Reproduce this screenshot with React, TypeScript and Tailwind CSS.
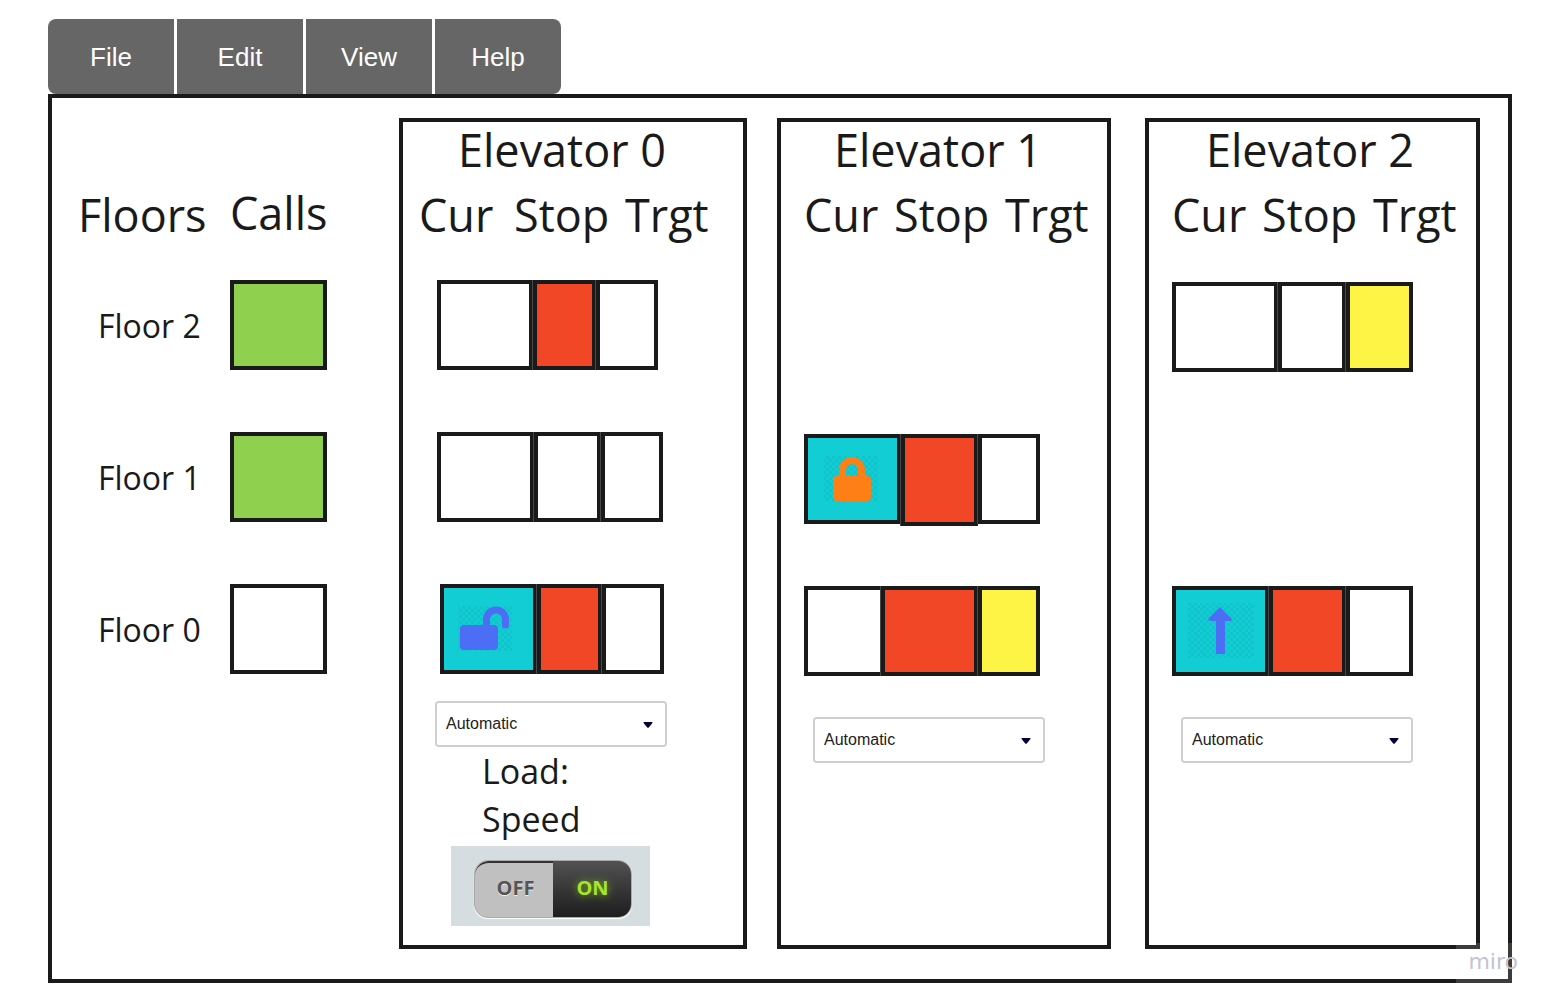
import { useState } from "react";
import type { ReactNode } from "react";

type CellData = { box: string; icon?: ReactNode };
type ElevatorData = {
  name: string;
  panel: string;
  title: string;
  header: string;
  curWidth: string;
  rowsClass: string;
  rows: { floor: string; className?: string; cells: CellData[] }[];
  selectClass: string;
};

const RED = "bg-[#f24726]";
const YELLOW = "bg-[#fef445]";
const CYAN = "bg-[#12cdd4]";

function Checker({ id, x, y, width, height }: { id: string; x: number; y: number; width: number; height: number }) {
  return (
    <>
      <defs>
        <pattern id={id} width="6" height="6" patternUnits="userSpaceOnUse">
          <path d="M0 0h3v3H0zM3 3h3v3H3z" fill="#0b8f94" fillOpacity="0.16" />
        </pattern>
      </defs>
      <rect x={x} y={y} width={width} height={height} fill={`url(#${id})`} />
    </>
  );
}

function UnlockedIcon() {
  return (
    <svg viewBox="0 0 89 82" className="h-full w-full" aria-label="Doors unlocked" role="img">
      <Checker id="unlocked-checker" x={14} y={18} width={54} height={45} />
      <rect x="16" y="37" width="38" height="25" rx="4" fill="#4c6ef5" />
      <path d="M42.500 39v-7.500a9.500 9.500 0 0 1 19 0v5.500" fill="none" stroke="#4c6ef5" strokeWidth="7" strokeLinecap="round" />
    </svg>
  );
}

function LockedIcon() {
  return (
    <svg viewBox="0 0 89 82" className="h-full w-full" aria-label="Doors locked" role="img">
      <Checker id="locked-checker" x={16} y={18} width={54} height={45} />
      <rect x="25" y="38" width="38" height="25" rx="4" fill="#ff7f17" />
      <path d="M34.500 40v-8a9.500 9.500 0 0 1 19 0v8" fill="none" stroke="#ff7f17" strokeWidth="7" />
    </svg>
  );
}

function UpIcon() {
  return (
    <svg viewBox="0 0 89 82" className="h-full w-full" aria-label="Moving up" role="img">
      <Checker id="up-checker" x={12} y={13} width={66} height={55} />
      <path d="M44 17 56 29l-1 2h-6v33h-9V31h-6l-2-2z" fill="#4c6ef5" />
    </svg>
  );
}

const elevators: ElevatorData[] = [
  {
    name: "Elevator 0",
    panel: "basis-[348px] mr-[30px]",
    title: "pl-[55px]",
    header: "pl-4",
    curWidth: "w-[95px]",
    rowsClass: "mt-10 pl-[34px]",
    rows: [
      { floor: "Floor 2", cells: [{ box: "w-24 h-[90px]" }, { box: `w-[63px] h-[90px] ${RED}` }, { box: "w-[62px] h-[90px]" }] },
      { floor: "Floor 1", cells: [{ box: "w-[97px] h-[90px]" }, { box: "w-[67px] h-[90px]" }, { box: "w-[62px] h-[90px]" }] },
      {
        floor: "Floor 0",
        className: "pl-[3px]",
        cells: [
          { box: `w-[97px] h-[90px] ${CYAN}`, icon: <UnlockedIcon /> },
          { box: `w-[65px] h-[90px] ${RED}` },
          { box: "w-[62px] h-[90px]" },
        ],
      },
    ],
    selectClass: "mt-[27px] ml-8",
  },
  {
    name: "Elevator 1",
    panel: "basis-[334px] mr-[34px]",
    title: "pl-[53px]",
    header: "pl-[23px]",
    curWidth: "w-[90px]",
    rowsClass: "mt-[42px] pl-[23px]",
    rows: [
      { floor: "Floor 2", cells: [] },
      {
        floor: "Floor 1",
        cells: [
          { box: `w-[97px] h-[90px] ${CYAN}`, icon: <LockedIcon /> },
          { box: `w-[77px] h-[92px] ${RED}` },
          { box: "w-[62px] h-[90px]" },
        ],
      },
      {
        floor: "Floor 0",
        cells: [{ box: "w-[81px] h-[90px]" }, { box: `-ml-1 w-[97px] h-[90px] ${RED}` }, { box: `w-[62px] h-[90px] ${YELLOW}` }],
      },
    ],
    selectClass: "mt-[41px] ml-8",
  },
  {
    name: "Elevator 2",
    panel: "basis-[335px] mr-7",
    title: "pl-[57px]",
    header: "pl-[23px]",
    curWidth: "w-[90px]",
    rowsClass: "mt-[42px] pl-[23px]",
    rows: [
      { floor: "Floor 2", cells: [{ box: "w-[106px] h-[90px]" }, { box: "w-[68px] h-[90px]" }, { box: `w-[67px] h-[90px] ${YELLOW}` }] },
      { floor: "Floor 1", cells: [] },
      {
        floor: "Floor 0",
        cells: [
          { box: `w-[97px] h-[90px] ${CYAN}`, icon: <UpIcon /> },
          { box: `w-[77px] h-[90px] ${RED}` },
          { box: "w-[67px] h-[90px]" },
        ],
      },
    ],
    selectClass: "mt-[41px] ml-8",
  },
];

const calls = [
  { floor: "Floor 2", color: "bg-[#8fd14f]" },
  { floor: "Floor 1", color: "bg-[#8fd14f]" },
  { floor: "Floor 0", color: "bg-white" },
];

function ModeSelect({ label, className }: { label: string; className: string }) {
  return (
    <div className={`relative w-[232px] ${className}`}>
      <select
        aria-label={`${label} mode`}
        defaultValue="Automatic"
        className="h-[46px] w-full appearance-none rounded-sm border-2 border-[#cfcfcf] bg-white px-[9px] font-['Liberation_Sans',sans-serif] text-[16px] text-[#222]"
      >
        <option>Automatic</option>
        <option>Manual</option>
      </select>
      <svg viewBox="0 0 10 6" className="pointer-events-none absolute top-[21px] right-[14px] h-[6px] w-[10px]" aria-hidden="true">
        <path d="M1 0h8q1 0 .4 1L6 5.300q-1 1-2 0L.6 1Q0 0 1 0z" fill="#050038" />
      </svg>
    </div>
  );
}

function SpeedSwitch() {
  const [on, setOn] = useState(true);
  return (
    <div className="mt-[3px] ml-12 flex h-20 w-[199px] justify-center bg-[#d6dde0] pt-[14px] pl-1">
      <button
        type="button"
        role="switch"
        aria-checked={on}
        aria-label="Speed"
        onClick={() => setOn(!on)}
        className="flex h-[58px] w-[158px] overflow-hidden rounded-[14px] border border-[#aaa] bg-[#c0c0c0] font-['Open_Sans',sans-serif] text-[20px] font-bold shadow-[0_1px_1px_#fff]"
      >
        <span className="flex h-full w-1/2 items-center justify-center rounded-tl-[14px] border-t-2 border-t-[#333] pb-1 pl-1 text-[#555] [text-shadow:0_1px_0_#eee]">OFF</span>
        <span className="flex h-full w-1/2 items-center justify-center border-t-2 border-t-[#505050] bg-linear-to-b from-[#505050] to-[#1e1e1e] pb-1 pl-[2px] text-[#a5e52b] [text-shadow:0_0_8px_#7fb020]">ON</span>
      </button>
    </div>
  );
}

function Elevator({ data, children }: { data: ElevatorData; children?: ReactNode }) {
  return (
    <section className={`shrink-0 grow border-4 border-[#1a1a1a] pb-[19px] ${data.panel}`}>
      <h2 className={`pt-[2px] text-[45px] leading-[52px] ${data.title}`}>{data.name}</h2>
      <div className={`mt-[13px] -mb-px flex text-[45px] leading-[52px] ${data.header}`}>
        <span className={data.curWidth}>Cur</span>
        <span className="w-[111px]">Stop</span>
        <span>Trgt</span>
      </div>
      <div className={`flex flex-col gap-[62px] ${data.rowsClass}`}>
        {data.rows.map((row) => (
          <div key={row.floor} className={`flex h-[90px] items-start ${row.className ?? ""}`}>
            {row.cells.map((cell, i) => (
              <div key={i} className={`shrink-0 border-4 border-[#1a1a1a] not-first:shadow-[-1px_0_0_#484848] ${cell.box}`}>
                {cell.icon}
              </div>
            ))}
          </div>
        ))}
      </div>
      <ModeSelect label={data.name} className={data.selectClass} />
      {children}
    </section>
  );
}

export default function App() {
  return (
    <div className="min-h-screen bg-white pt-[19px] pr-[41px] pl-12 font-['Open_Sans',sans-serif] text-[#1a1a1a]">
      <nav className="flex gap-[3px] font-['Liberation_Sans',sans-serif] text-[26px] text-white">
        {["File", "Edit", "View", "Help"].map((item) => (
          <button key={item} type="button" className="h-[75px] w-[126px] bg-[#666] pt-[2px] first:rounded-l-lg last:rounded-r-lg">
            {item}
          </button>
        ))}
      </nav>
      <main className="relative flex border-4 border-[#1a1a1a] pt-5 pb-[30px]">
        <section className="shrink-0 grow basis-[347px] pl-[26px]">
          <div className="-mb-px flex pt-[69px] text-[45px] leading-[52px]">
            <h2 className="mt-[2px] w-[152px]">Floors</h2>
            <h2>Calls</h2>
          </div>
          <div className="mt-10 flex flex-col gap-[62px]">
            {calls.map((call) => (
              <div key={call.floor} className="flex h-[90px] items-center">
                <span className="w-[152px] pt-[2px] pl-5 text-[32px]">{call.floor}</span>
                <button
                  type="button"
                  aria-label={`Call ${call.floor}`}
                  className={`h-[90px] w-[97px] border-4 border-[#1a1a1a] ${call.color}`}
                />
              </div>
            ))}
          </div>
        </section>
        {elevators.map((data, i) => (
          <Elevator key={data.name} data={data}>
            {i === 0 && (
              <>
                <div className="pl-[79px] text-[34px] leading-[48px]">
                  <p>Load:</p>
                  <p>Speed</p>
                </div>
                <SpeedSwitch />
              </>
            )}
          </Elevator>
        ))}
        <div className="absolute right-[-12px] bottom-[-4px] flex h-10 w-[64px] items-center justify-end bg-white/15 pr-[2px] pb-[3px] font-['DejaVu_Sans',sans-serif] text-[22px] text-[#c3c3d2]">
          miro
        </div>
      </main>
    </div>
  );
}
